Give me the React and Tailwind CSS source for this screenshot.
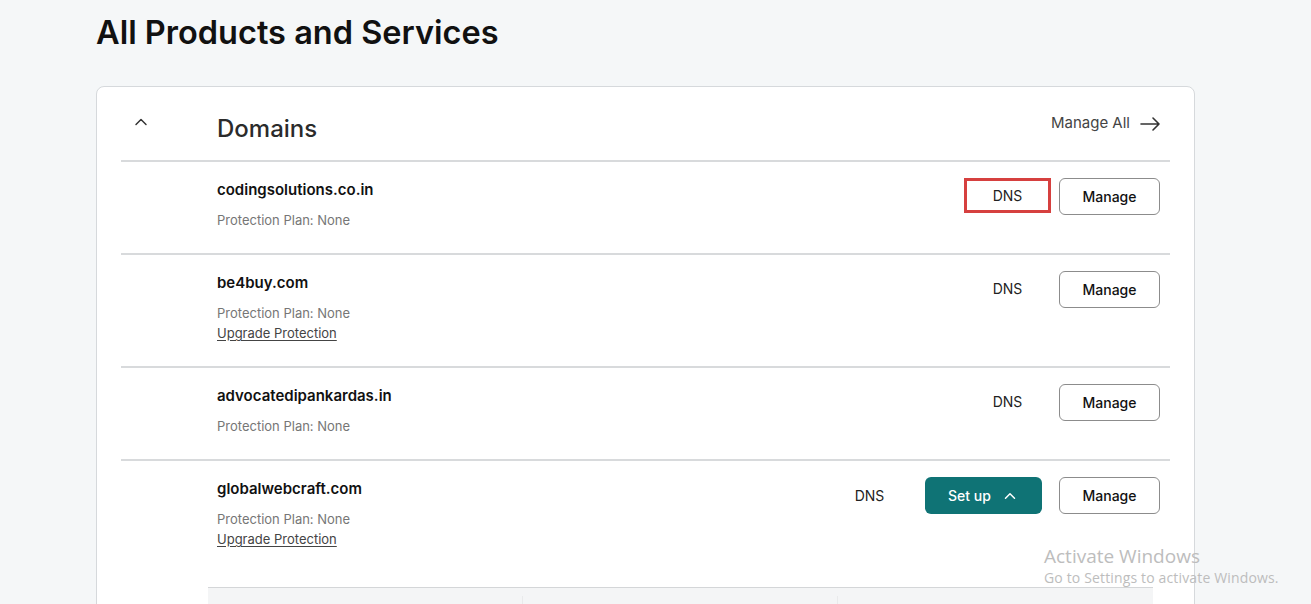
import { ChevronUp } from 'lucide-react';

const domains = [
  { name: 'codingsolutions.co.in', upgrade: false, highlight: true },
  { name: 'be4buy.com', upgrade: true },
  { name: 'advocatedipankardas.in', upgrade: false },
  { name: 'globalwebcraft.com', upgrade: true, setup: true },
];

const DomainRow = ({ d }) => (
  <div className={`flex border-t-2 border-[#d8dadc] pl-24 pr-[10px] ${d.setup ? 'pb-[38px]' : 'pb-[23px]'}`}>
    <div className="flex-1 pt-[18px]">
      <div className="text-[15px] leading-5 font-semibold text-[#111]">{d.name}</div>
      <div className="mt-2.5 text-[13px] leading-5 text-[#767676]">Protection Plan: None</div>
      {d.upgrade && (
        <div className="text-[13px] leading-5 text-[#444] underline underline-offset-2">Upgrade Protection</div>
      )}
    </div>
    <div className="flex items-start pt-4">
      {d.setup ? (
        <>
          <button className="w-[87px] h-9 text-[14px] text-[#222]">DNS</button>
          <button className="ml-3 w-[117px] h-[37px] rounded-md bg-[#0f7375] text-white text-[14px] font-medium flex items-center justify-center gap-2.5">
            Set up
            <ChevronUp size={18} strokeWidth={2} />
          </button>
          <div className="w-[17px]" />
        </>
      ) : (
        <>
          <button
            className={`w-[87px] h-[35px] text-[14px] text-[#222] ${d.highlight ? 'border-[3px] border-[#d6403f]' : ''}`}
          >
            DNS
          </button>
          <div className="w-2" />
        </>
      )}
      <button className="w-[101px] h-[37px] rounded-md border border-[#8c8c8c] text-[14px] font-medium text-[#111] bg-white">
        Manage
      </button>
    </div>
  </div>
);

export default function App() {
  return (
    <div className="bg-[#f5f7f8] pl-24 pr-[116px] pt-[13px] overflow-hidden h-[604px] relative" style={{ fontFamily: 'Inter, "Noto Sans", sans-serif' }}>
      <h1 className="text-[32.5px] leading-10 font-semibold text-[#111]">All Products and Services</h1>

      <div className="mt-[33px] bg-white border border-[#d6d9dc] rounded-lg px-6">
        <div className="flex items-center h-[73px]">
          <div className="w-24 pl-[10px] -mt-1 text-[#333]">
            <ChevronUp size={20} strokeWidth={1.75} />
          </div>
          <h2 className="flex-1 text-[24px] font-medium text-[#2b2b2b] mt-[10px]">Domains</h2>
          <div className="flex items-center gap-2.5 pr-[10px] text-[15px] text-[#444]">
            Manage All
            <svg width="20" height="14" viewBox="0 0 20 14" fill="none" stroke="#333" strokeWidth="1.6" strokeLinecap="round" strokeLinejoin="round">
              <path d="M1 7h18M13 1l6 6-6 6" />
            </svg>
          </div>
        </div>

        {domains.map((d) => (
          <DomainRow key={d.name} d={d} />
        ))}

        <div className="ml-[87px] mr-[17px] h-16 border-t border-[#d4d6d8] bg-[#f4f5f6] grid grid-cols-3">
          <div className="border-r border-[#e9eaeb] mt-2" />
          <div className="border-r border-[#e9eaeb] mt-2" />
          <div />
        </div>
      </div>

      <div className="absolute left-[1044px] top-[544px] text-[#bdbdbd] pointer-events-none" style={{ fontFamily: '"Open Sans", "Noto Sans", sans-serif' }}>
        <div className="text-[19px] leading-6">Activate Windows</div>
        <div className="text-[14px] leading-5 tracking-[0.15px]">Go to Settings to activate Windows.</div>
      </div>
    </div>
  );
}
